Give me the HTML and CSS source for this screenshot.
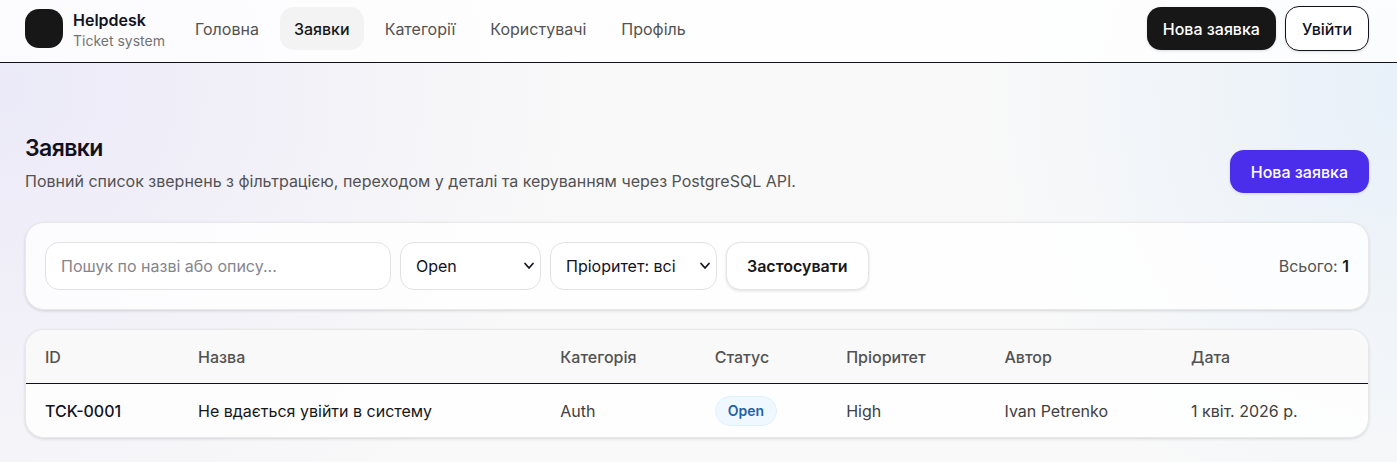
FILE: index.html
```html
<!DOCTYPE html>
<html lang="uk">
<head>
    <meta charset="UTF-8">
    <meta name="viewport" content="width=device-width, initial-scale=1.0">
    <title>Helpdesk - Заявки</title>
    <link rel="stylesheet" href="styles.css">
</head>
<body>
    <header class="header">
        <a class="brand" href="#">
            <span class="brand-logo"></span>
            <span class="brand-text">
                <span class="brand-name">Helpdesk</span>
                <span class="brand-sub">Ticket system</span>
            </span>
        </a>
        <nav class="nav">
            <a class="nav-link" href="#">Головна</a>
            <a class="nav-link active" href="#">Заявки</a>
            <a class="nav-link" href="#">Категорії</a>
            <a class="nav-link" href="#">Користувачі</a>
            <a class="nav-link" href="#">Профіль</a>
        </nav>
        <div class="header-actions">
            <button type="button" class="btn btn-dark">Нова заявка</button>
            <button type="button" class="btn btn-outline">Увійти</button>
        </div>
    </header>

    <main class="main">
        <div class="page-head">
            <div>
                <h1 class="page-title">Заявки</h1>
                <p class="page-desc">Повний список звернень з фільтрацією, переходом у деталі та керуванням через PostgreSQL API.</p>
            </div>
            <button type="button" class="btn btn-primary">Нова заявка</button>
        </div>

        <form class="card filters">
            <input class="field search" type="search" aria-label="Пошук" placeholder="Пошук по назві або опису...">
            <div class="select-wrap status-filter">
                <select class="field" aria-label="Статус">
                    <option>Open</option>
                </select>
                <svg class="chevron" viewBox="0 0 12 8" aria-hidden="true"><path d="M2 1.500 6 6l4-4.500"/></svg>
            </div>
            <div class="select-wrap priority-filter">
                <select class="field" aria-label="Пріоритет">
                    <option>Пріоритет: всі</option>
                </select>
                <svg class="chevron" viewBox="0 0 12 8" aria-hidden="true"><path d="M2 1.500 6 6l4-4.500"/></svg>
            </div>
            <button type="button" class="btn btn-light">Застосувати</button>
            <div class="total">Всього: <strong>1</strong></div>
        </form>

        <div class="card table-card">
            <table class="tickets">
                <thead>
                    <tr>
                        <th class="col-id">ID</th>
                        <th class="col-name">Назва</th>
                        <th class="col-category">Категорія</th>
                        <th class="col-status">Статус</th>
                        <th class="col-priority">Пріоритет</th>
                        <th class="col-author">Автор</th>
                        <th>Дата</th>
                    </tr>
                </thead>
                <tbody>
                    <tr>
                        <td class="ticket-id">TCK-0001</td>
                        <td class="ticket-name">Не вдається увійти в систему</td>
                        <td>Auth</td>
                        <td><span class="badge">Open</span></td>
                        <td>High</td>
                        <td>Ivan Petrenko</td>
                        <td>1 квіт. 2026 р.</td>
                    </tr>
                </tbody>
            </table>
        </div>
    </main>
</body>
</html>
```

FILE: styles.css
```css
* {
    box-sizing: border-box;
}
body {
    margin: 0;
    min-height: 100vh;
    font-family: Inter, "Liberation Sans", sans-serif;
    font-size: 16px;
    line-height: 24px;
    color: #171717;
    background:
        radial-gradient(ellipse 42% 110% at 0% 20%, rgba(99, 80, 240, 0.09), transparent),
        radial-gradient(ellipse 30% 100% at 100% 20%, rgba(56, 150, 248, 0.09), transparent),
        #f9f9f9;
}
button,
input,
select {
    font: inherit;
}
.header {
    display: flex;
    align-items: center;
    height: 63px;
    padding: 0 28px 5px 25px;
    background: rgba(255, 255, 255, 0.8);
    border-bottom: 1px solid #12121f;
}
.brand {
    display: flex;
    align-items: center;
    gap: 10px;
    margin-right: 16px;
    color: #12121f;
    text-decoration: none;
}
.brand-logo {
    width: 38px;
    height: 39px;
    border-radius: 14px;
    background: #171717;
}
.brand-text {
    display: flex;
    flex-direction: column;
    padding-top: 2px;
}
.brand-name {
    font-weight: 600;
    line-height: 22px;
}
.brand-sub {
    font-size: 14px;
    line-height: 20px;
    color: #737373;
}
.nav {
    display: flex;
    gap: 7px;
}
.nav-link {
    padding: 10px 14px 9px;
    border-radius: 14px;
    color: #525252;
    text-decoration: none;
}
.nav-link.active {
    background: #f3f3f3;
    color: #171717;
    font-weight: 500;
}
.header-actions {
    display: flex;
    align-items: center;
    gap: 9px;
    margin-left: auto;
}
.btn {
    padding: 10px 16px 9px;
    border: none;
    border-radius: 14px;
    font-weight: 500;
    cursor: pointer;
    box-shadow: 0 1px 3px rgba(0, 0, 0, 0.12);
}
.btn-dark {
    background: #171717;
    color: #fff;
}
.btn-outline {
    border: 1px solid #12121f;
    background: #fff;
    color: #12121f;
}
.btn-primary {
    padding: 10px 21px 9px;
    background: #4b2eec;
    color: #fff;
}
.btn-light {
    height: 48px;
    padding: 0 20px;
    border: 1px solid #e5e5e5;
    background: #fff;
    color: #171717;
    font-weight: 600;
}
.main {
    padding: 69px 28px 24px 25px;
}
.page-head {
    display: flex;
    align-items: flex-end;
    justify-content: space-between;
    margin-bottom: 29px;
}
.page-title {
    margin: 0 0 5px;
    font-size: 23px;
    line-height: 32px;
    font-weight: 600;
    letter-spacing: -0.025em;
    color: #12121f;
}
.page-desc {
    margin: 0;
    color: #525252;
}
.card {
    border: 1px solid #e8e8e8;
    border-radius: 19px;
    background: rgba(255, 255, 255, 0.8);
    box-shadow: 0 1px 3px rgba(0, 0, 0, 0.14);
}
.filters {
    display: flex;
    align-items: center;
    gap: 9px;
    margin-bottom: 19px;
    padding: 19px;
}
.field {
    width: 100%;
    height: 48px;
    padding: 0 15px;
    border: 1px solid #e2e2e2;
    border-radius: 14px;
    background: #fff;
    color: #12121f;
    appearance: none;
}
.search {
    width: 346px;
}
.search::placeholder {
    color: #84858d;
}
.select-wrap {
    position: relative;
}
.status-filter {
    width: 141px;
}
.priority-filter {
    width: 167px;
}
.chevron {
    position: absolute;
    top: 20px;
    right: 6px;
    width: 12px;
    height: 8px;
    fill: none;
    stroke: #12121f;
    stroke-width: 1.7;
    stroke-linecap: round;
    stroke-linejoin: round;
    pointer-events: none;
}
.total {
    margin-left: auto;
    color: #525252;
}
.total strong {
    font-weight: 600;
    color: #171717;
}
.table-card {
    overflow: hidden;
}
.tickets {
    width: 100%;
    table-layout: fixed;
    border-collapse: collapse;
    text-align: left;
}
.tickets th {
    height: 53px;
    padding: 2px 19px 0;
    border-bottom: 1px solid #12121f;
    background: #f9f9f9;
    color: #525252;
    font-weight: 500;
}
.tickets td {
    height: 54px;
    padding: 2px 19px 0;
    color: #404040;
}
.col-id {
    width: 11.4%;
}
.col-name {
    width: 27%;
}
.col-category {
    width: 11.5%;
}
.col-status {
    width: 9.8%;
}
.col-priority {
    width: 11.8%;
}
.col-author {
    width: 13.9%;
}
.tickets .ticket-id {
    color: #12121f;
    font-weight: 500;
}
.tickets .ticket-name {
    color: #171717;
}
.badge {
    display: inline-block;
    padding: 4px 12px;
    border: 1px solid #dff0fd;
    border-radius: 15px;
    background: #f0f8ff;
    color: #1f62a6;
    font-size: 14px;
    line-height: 20px;
    font-weight: 600;
}
```
